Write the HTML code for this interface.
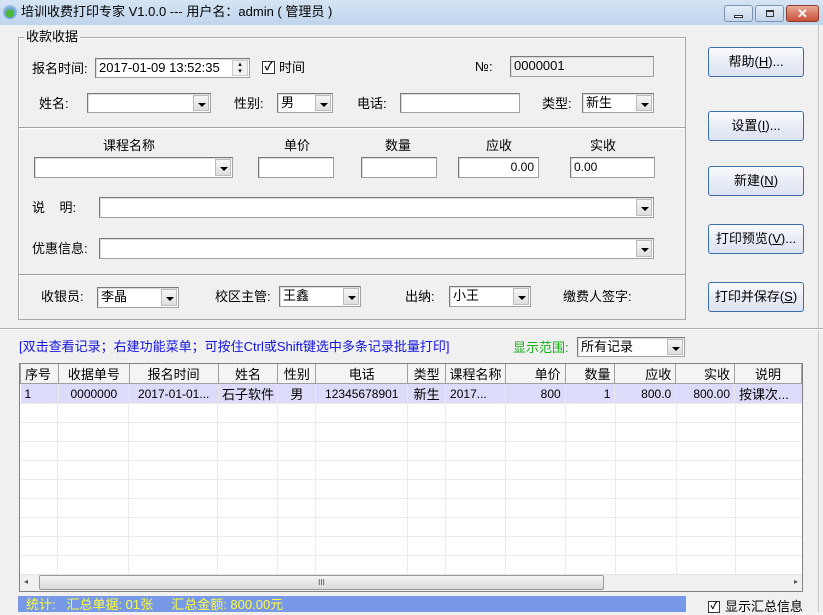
<!DOCTYPE html>
<html><head><meta charset="utf-8"><style>
*{box-sizing:border-box;margin:0;padding:0}
body{width:823px;height:612px;overflow:hidden;background:#f0f0f0;font-family:"Liberation Sans","Noto Sans CJK SC",sans-serif;font-size:12px;color:#000;position:relative}
.a{position:absolute;white-space:nowrap}
.lbl{position:absolute;white-space:nowrap;font-size:13px;line-height:16px}
.box{position:absolute;background:#fff;border:1px solid #a0a0a0;border-top-color:#7a7a7a;border-left-color:#7a7a7a;box-shadow:inset 1px 1px 0 #dcdcdc;font-size:12px;line-height:18px;padding-left:3px;overflow:hidden}
.dd{position:absolute;right:1px;top:1px;bottom:1px;width:16px;background:linear-gradient(#f6f6f6,#dedede);border-left:1px solid #c8c8c8;border:1px solid #bcbcbc}
.dd:after{content:"";position:absolute;left:4px;top:7px;border-left:4px solid transparent;border-right:4px solid transparent;border-top:4px solid #000}
.btn{position:absolute;left:708px;width:96px;height:30px;border:1px solid #3c6ea8;border-radius:3px;background:linear-gradient(#fafbfe,#e8ecf6 50%,#dde3f3);font-size:13px;line-height:28px;text-align:center}
.hl{position:absolute;height:1px;background:#a0a0a0;box-shadow:0 1px 0 #fff}
table{border-collapse:collapse;font-size:12px}
</style></head><body>
<!-- title bar -->
<div class="a" style="left:0;top:0;width:823px;height:25px;background:linear-gradient(#d5e4f4,#bfd4ec);"></div>
<div class="a" style="left:3px;top:5px;width:14px;height:14px;border-radius:50%;background:radial-gradient(circle at 50% 60%,#4ab83c 35%,#6aa0d8 40%,#c8dcf0)"></div>
<div class="a" style="left:21px;top:4px;font-size:13px;line-height:16px">培训收费打印专家 V1.0.0 --- 用户名：admin ( 管理员 )</div>
<div class="a" style="left:724px;top:5px;width:29px;height:17px;border:1px solid #7d93b3;border-radius:3px;background:linear-gradient(#e6eef8,#c5d5ea)"><div class="a" style="left:9px;top:9px;width:9px;height:3px;border:1px solid #333;background:#fff"></div></div>
<div class="a" style="left:755px;top:5px;width:29px;height:17px;border:1px solid #7d93b3;border-radius:3px;background:linear-gradient(#e6eef8,#c5d5ea)"><div class="a" style="left:10px;top:4px;width:8px;height:7px;border:1px solid #333;border-top-width:2px"></div></div>
<div class="a" style="left:786px;top:5px;width:33px;height:17px;border:1px solid #8a3a2a;border-radius:3px;background:linear-gradient(#e9a898,#c8503a);color:#fff;font-weight:bold;font-size:13px;line-height:15px;text-align:center">✕</div>
<div class="a" style="left:818px;top:25px;width:1px;height:587px;background:#c8c8c8"></div>

<!-- group box -->
<div class="a" style="left:18px;top:37px;width:668px;height:283px;border:1px solid #a8a8a8;box-shadow:inset 1px 1px 0 #fff"></div>
<div class="lbl" style="left:24px;top:29px;background:#f0f0f0;padding:0 2px">收款收据</div>
<div class="hl" style="left:19px;top:127px;width:666px"></div>
<div class="hl" style="left:19px;top:274px;width:666px"></div>

<div class="lbl" style="left:32px;top:61px">报名时间:</div>
<div class="box" style="left:95px;top:58px;width:155px;height:20px;font-size:13px">2017-01-09 13:52:35</div>
<div class="a" style="left:232px;top:60px;width:16px;height:16px;border:1px solid #ccc;background:#f2f2f2;font-size:7px;line-height:7px;text-align:center">▴<br>▾</div>
<div class="a" style="left:262px;top:61px;width:13px;height:13px;border:1px solid #333;background:#fff;font-size:11px;line-height:11px;text-align:center;font-weight:bold">✓</div>
<div class="lbl" style="left:279px;top:60px">时间</div>
<div class="lbl" style="left:475px;top:59px">№:</div>
<div class="box" style="left:510px;top:56px;width:144px;height:21px;background:#f0f0f0;font-size:13px">0000001</div>

<div class="lbl" style="left:39px;top:96px">姓名:</div>
<div class="box" style="left:87px;top:93px;width:124px;height:20px"><div class="dd"></div></div>
<div class="lbl" style="left:234px;top:96px">性别:</div>
<div class="box" style="left:277px;top:93px;width:56px;height:20px;font-size:13px">男<div class="dd"></div></div>
<div class="lbl" style="left:357px;top:96px">电话:</div>
<div class="box" style="left:400px;top:93px;width:120px;height:20px"></div>
<div class="lbl" style="left:542px;top:96px">类型:</div>
<div class="box" style="left:582px;top:93px;width:72px;height:20px;font-size:13px">新生<div class="dd"></div></div>

<div class="lbl" style="left:103px;top:138px">课程名称</div>
<div class="lbl" style="left:284px;top:138px">单价</div>
<div class="lbl" style="left:385px;top:138px">数量</div>
<div class="lbl" style="left:486px;top:138px">应收</div>
<div class="lbl" style="left:590px;top:138px">实收</div>
<div class="box" style="left:34px;top:157px;width:199px;height:21px"><div class="dd"></div></div>
<div class="box" style="left:258px;top:157px;width:76px;height:21px"></div>
<div class="box" style="left:361px;top:157px;width:76px;height:21px"></div>
<div class="box" style="left:458px;top:157px;width:81px;height:21px;text-align:right;padding-right:4px">0.00</div>
<div class="box" style="left:570px;top:157px;width:85px;height:21px">0.00</div>

<div class="lbl" style="left:32px;top:200px">说&nbsp;&nbsp;&nbsp;&nbsp;明:</div>
<div class="box" style="left:99px;top:197px;width:555px;height:21px"><div class="dd"></div></div>
<div class="lbl" style="left:32px;top:241px">优惠信息:</div>
<div class="box" style="left:99px;top:238px;width:555px;height:21px"><div class="dd"></div></div>

<div class="lbl" style="left:41px;top:289px">收银员:</div>
<div class="box" style="left:97px;top:287px;width:82px;height:21px;font-size:13px">李晶<div class="dd"></div></div>
<div class="lbl" style="left:215px;top:289px">校区主管:</div>
<div class="box" style="left:279px;top:286px;width:82px;height:21px;font-size:13px">王鑫<div class="dd"></div></div>
<div class="lbl" style="left:405px;top:289px">出纳:</div>
<div class="box" style="left:449px;top:286px;width:82px;height:21px;font-size:13px">小王<div class="dd"></div></div>
<div class="lbl" style="left:563px;top:289px">缴费人签字:</div>

<!-- buttons -->
<div class="btn" style="top:47px">帮助(<u>H</u>)...</div>
<div class="btn" style="top:111px">设置(<u>I</u>)...</div>
<div class="btn" style="top:166px">新建(<u>N</u>)</div>
<div class="btn" style="top:224px">打印预览(<u>V</u>)...</div>
<div class="btn" style="top:282px">打印并保存(<u>S</u>)</div>

<div class="hl" style="left:0;top:328px;width:823px;background:#b0b0b0"></div>

<div class="lbl" style="left:19px;top:339px;color:#1414e0">[双击查看记录；右建功能菜单；可按住Ctrl或Shift键选中多条记录批量打印]</div>
<div class="lbl" style="left:513px;top:340px;color:#10b010">显示范围:</div>
<div class="box" style="left:577px;top:337px;width:108px;height:20px;font-size:13px">所有记录<div class="dd"></div></div>

<!-- grid -->
<div class="a" style="left:19px;top:363px;width:784px;height:229px;background:#fff;border:1px solid #828282;overflow:hidden">
<table style="position:absolute;left:0;top:0">
<colgroup><col style="width:38px"><col style="width:71px"><col style="width:89px"><col style="width:60px"><col style="width:38px"><col style="width:92px"><col style="width:38px"><col style="width:60px"><col style="width:60px"><col style="width:50px"><col style="width:61px"><col style="width:59px"><col style="width:67px"></colgroup>
<tr style="height:19px;background:#f4f4f4;font-size:13px">
<td style="border:1px solid #a0a0a0;border-top:0;padding-left:4px">序号</td><td style="border:1px solid #a0a0a0;border-top:0;text-align:center">收据单号</td><td style="border:1px solid #a0a0a0;border-top:0;text-align:center">报名时间</td><td style="border:1px solid #a0a0a0;border-top:0;text-align:center">姓名</td><td style="border:1px solid #a0a0a0;border-top:0;text-align:center">性别</td><td style="border:1px solid #a0a0a0;border-top:0;text-align:center">电话</td><td style="border:1px solid #a0a0a0;border-top:0;text-align:center">类型</td><td style="border:1px solid #a0a0a0;border-top:0;text-align:center">课程名称</td><td style="border:1px solid #a0a0a0;border-top:0;text-align:right;padding-right:4px">单价</td><td style="border:1px solid #a0a0a0;border-top:0;text-align:right;padding-right:4px">数量</td><td style="border:1px solid #a0a0a0;border-top:0;text-align:right;padding-right:4px">应收</td><td style="border:1px solid #a0a0a0;border-top:0;text-align:right;padding-right:4px">实收</td><td style="border:1px solid #a0a0a0;border-top:0;text-align:center">说明</td></tr>
<tr style="height:20px;background:#dcdcfa">
<td style="padding-left:4px;border-right:1px solid #e8e8e8">1</td><td style="text-align:center;border-right:1px solid #e8e8e8">0000000</td><td style="text-align:center;border-right:1px solid #e8e8e8">2017-01-01...</td><td style="text-align:center;border-right:1px solid #e8e8e8;font-size:13px">石子软件</td><td style="text-align:center;border-right:1px solid #e8e8e8;font-size:13px">男</td><td style="text-align:center;border-right:1px solid #e8e8e8">12345678901</td><td style="text-align:center;border-right:1px solid #e8e8e8;font-size:13px">新生</td><td style="padding-left:4px;border-right:1px solid #e8e8e8">2017...</td><td style="text-align:right;padding-right:4px;border-right:1px solid #e8e8e8">800</td><td style="text-align:right;padding-right:4px;border-right:1px solid #e8e8e8">1</td><td style="text-align:right;padding-right:4px;border-right:1px solid #e8e8e8">800.0</td><td style="text-align:right;padding-right:4px;border-right:1px solid #e8e8e8">800.00</td><td style="padding-left:4px;font-size:13px">按课次...</td></tr>
<tr style="height:19px"><td style="border:1px solid #ececec" colspan="1"></td><td style="border:1px solid #ececec"></td><td style="border:1px solid #ececec"></td><td style="border:1px solid #ececec"></td><td style="border:1px solid #ececec"></td><td style="border:1px solid #ececec"></td><td style="border:1px solid #ececec"></td><td style="border:1px solid #ececec"></td><td style="border:1px solid #ececec"></td><td style="border:1px solid #ececec"></td><td style="border:1px solid #ececec"></td><td style="border:1px solid #ececec"></td><td style="border:1px solid #ececec"></td></tr>
</table>
<div class="a" style="left:0;top:40px;width:782px;height:170px;background:
repeating-linear-gradient(#fff 0 18px,#ececec 18px 19px),#fff"></div>
<div class="a" style="left:0;top:40px;width:782px;height:170px;background:
linear-gradient(90deg,transparent 37px,#ececec 37px 38px,transparent 38px 108px,#ececec 108px 109px,transparent 109px 197px,#ececec 197px 198px,transparent 198px 257px,#ececec 257px 258px,transparent 258px 295px,#ececec 295px 296px,transparent 296px 387px,#ececec 387px 388px,transparent 388px 425px,#ececec 425px 426px,transparent 426px 485px,#ececec 485px 486px,transparent 486px 545px,#ececec 545px 546px,transparent 546px 595px,#ececec 595px 596px,transparent 596px 656px,#ececec 656px 657px,transparent 657px 715px,#ececec 715px 716px,transparent 716px)"></div>
<div class="a" style="left:0;top:210px;width:782px;height:17px;background:#f0f0f0;border-top:1px solid #e4e4e4"></div>
<div class="a" style="left:4px;top:213px;font-size:8px;color:#555">◂</div>
<div class="a" style="left:774px;top:213px;font-size:8px;color:#555">▸</div>
<div class="a" style="left:19px;top:211px;width:565px;height:15px;border:1px solid #9a9a9a;border-radius:2px;background:linear-gradient(#f4f4f4,#dadada);font-size:8px;text-align:center;line-height:13px;color:#444">III</div>
</div>

<!-- status -->
<div class="a" style="left:18px;top:596px;width:668px;height:16px;background:#7799e8;color:#ffff3a;font-size:13px;line-height:18px;padding-left:8px">统计:&nbsp;&nbsp;&nbsp;汇总单据: 01张&nbsp;&nbsp;&nbsp;&nbsp;&nbsp;汇总金额: 800.00元</div>
<div class="a" style="left:708px;top:601px;width:12px;height:12px;border:1px solid #333;background:#fff;font-size:10px;line-height:10px;text-align:center;font-weight:bold">✓</div>
<div class="lbl" style="left:725px;top:599px">显示汇总信息</div>
</body></html>
